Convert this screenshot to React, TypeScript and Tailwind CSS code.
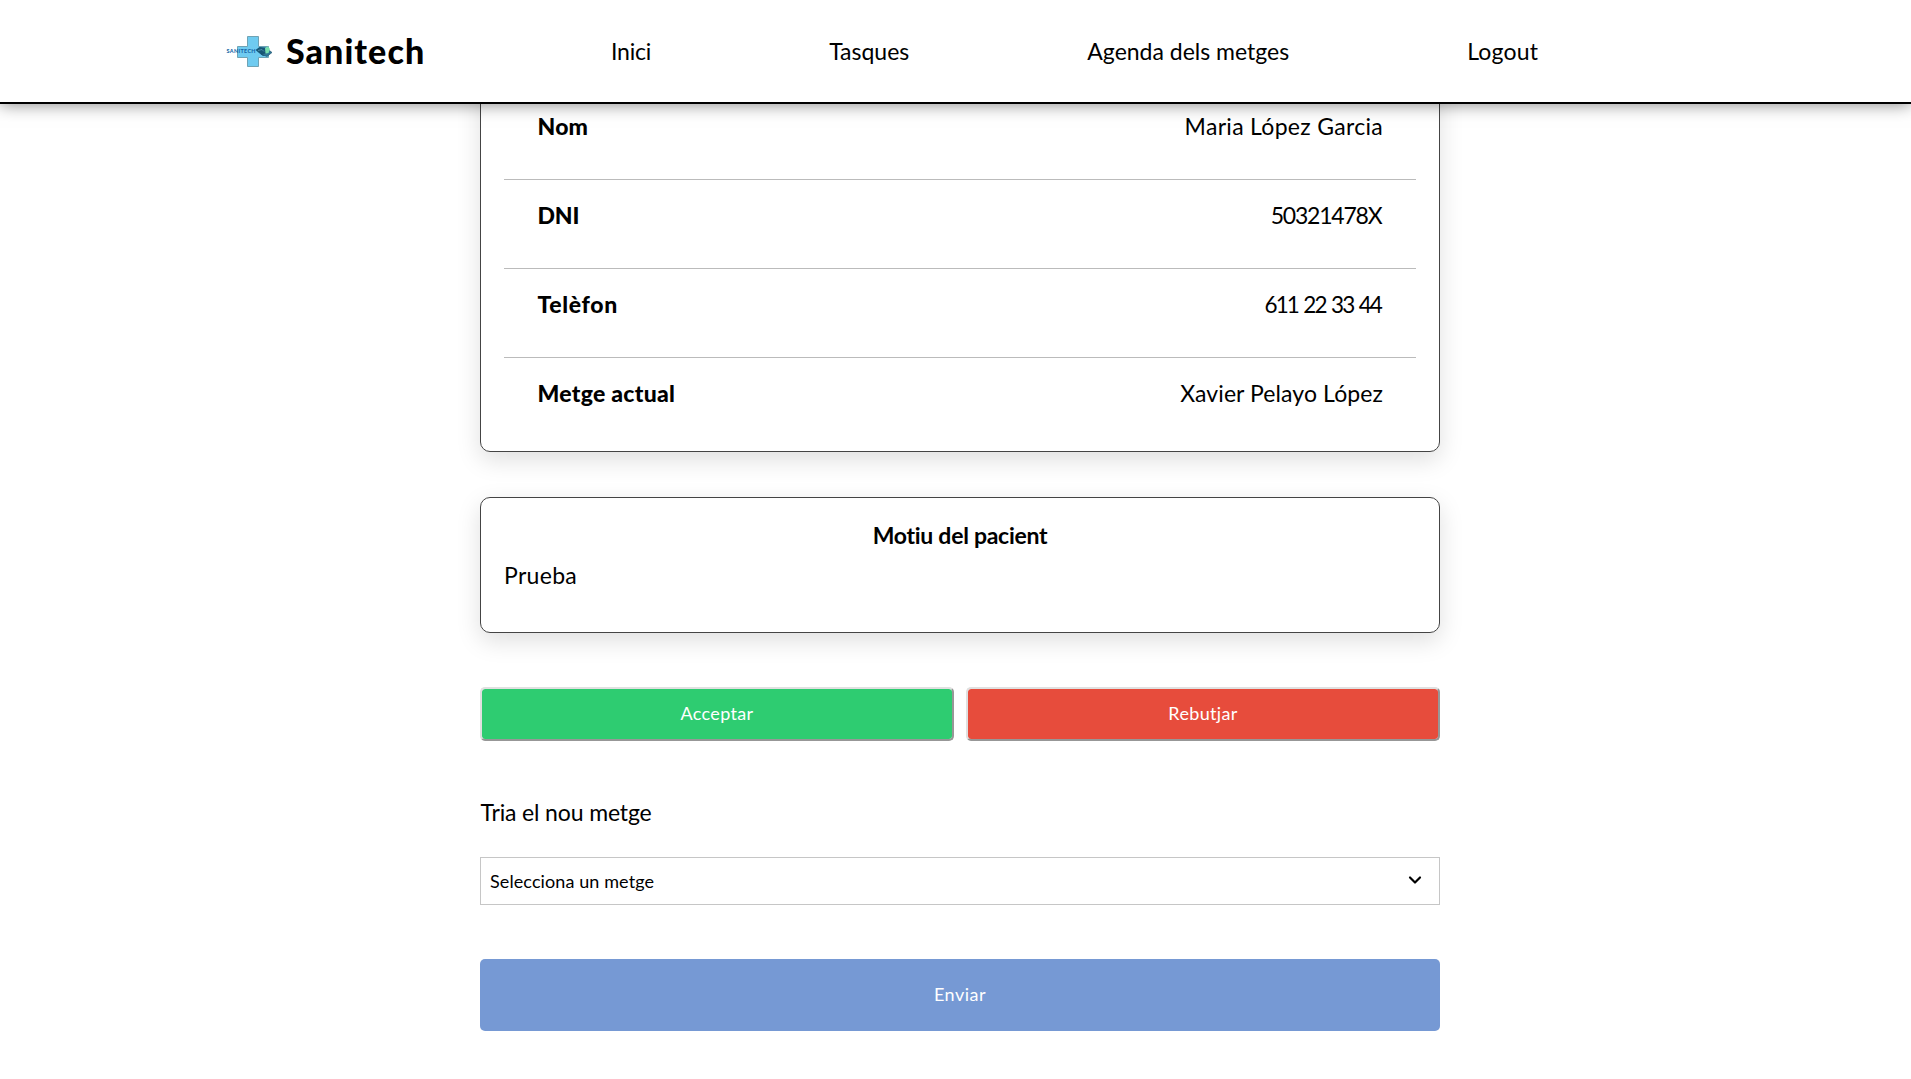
import { ChevronDown } from "lucide-react";

const links = [
  { label: "Inici", tracking: "pl-px tracking-[-0.2px]" },
  { label: "Tasques", tracking: "" },
  { label: "Agenda dels metges", tracking: "" },
  { label: "Logout", tracking: "tracking-[0.18px]" },
];

const patient = [
  { label: "Nom", labelTracking: "tracking-[0.2px]", value: "Maria López Garcia", valueTracking: "tracking-[0.3px]" },
  { label: "DNI", labelTracking: "tracking-[-0.2px]", value: "50321478X", valueTracking: "tracking-[-1.2px] mr-[1.5px]" },
  {
    label: "Telèfon",
    labelTracking: "tracking-[0.65px]",
    value: "611 22 33 44",
    valueTracking: "text-[22.5px] tracking-[-1.9px] [word-spacing:1.5px] mr-[2px]",
  },
  { label: "Metge actual", labelTracking: "tracking-[0.27px]", value: "Xavier Pelayo López", valueTracking: "tracking-[0.09px]" },
];

function Logo() {
  return (
    <svg width="48" height="34" viewBox="0 0 48 34" className="mt-[2px] shrink-0">
      <path
        d="M21.5 1.5h11v10h10v11h-10v9h-11v-9h-10v-11h10z"
        fill="#6fcbf0"
        stroke="#6fa3b4"
        strokeWidth="1"
      />
      <text x="0.5" y="18.2" fontSize="5.4" fontWeight="900" fill="#1766a8" textLength="29" fontFamily="Lato, sans-serif">
        SANITECH
      </text>
      <path d="M29.5 15l4-3 6.500.5 3 3.500-1 3-5 2-4-3z" fill="#175777" />
      <path d="M35 19l6 2.500 5-4-2.500-2-4 2.500z" fill="#2f7796" stroke="#174b68" strokeWidth="0.6" />
      <path d="M39 13l3-1.500 2 2.500-1.500 4-3 .5z" fill="#78dfae" />
      <path d="M32 15.500l4-1 2 2" stroke="#65a6bd" strokeWidth="0.7" fill="none" />
    </svg>
  );
}

export default function App() {
  return (
    <div className="h-[1079px] overflow-hidden bg-white font-['Lato',sans-serif] text-[23px] leading-[29px] text-black [font-variant-ligatures:none]">
      <header className="relative z-10 flex h-[104px] items-center border-b-2 border-black bg-white pl-[226px] shadow-[0_0_16px_rgba(0,0,0,0.5)]">
        <div className="flex w-[384px] items-center gap-3">
          <Logo />
          <span className="text-[34px] leading-[40px] font-black tracking-[1.08px]">Sanitech</span>
        </div>
        <nav className="flex gap-[178px] whitespace-nowrap">
          {links.map((l) => (
            <a key={l.label} className={l.tracking}>
              {l.label}
            </a>
          ))}
        </nav>
      </header>

      <main className="-mt-[37.2px] ml-[480px] w-[960px]">
        <section className="h-[385.2px] rounded-[10px] border border-[#444] p-[23px] shadow-[0_8px_24px_rgba(0,0,0,0.13)]">
          {patient.map((p) => (
            <div
              key={p.label}
              className="flex h-[89.2px] justify-between border-b border-[#bbb] pt-[21px] pr-[33px] pl-[33.5px] last:border-b-0"
            >
              <span className={`font-black ${p.labelTracking}`}>{p.label}</span>
              <span className={p.valueTracking}>{p.value}</span>
            </div>
          ))}
        </section>

        <section className="mt-[45px] h-[136px] rounded-[10px] border border-[#444] px-[22px] pt-[22.5px] shadow-[0_8px_24px_rgba(0,0,0,0.13)]">
          <h2 className="text-center font-bold tracking-[-0.27px]">Motiu del pacient</h2>
          <p className="mt-[11px] pl-px tracking-[0.3px]">Prueba</p>
        </section>

        <div className="mt-[54px] flex gap-3 text-lg tracking-[0.34px] text-white">
          <button className="h-[54px] flex-1 rounded-[5px] border-2 border-t-[#e0e0e0] border-r-[#979797] border-b-[#979797] border-l-[#e0e0e0] bg-[#2ecc71] bg-clip-padding pb-[2px]">
            Acceptar
          </button>
          <button className="h-[54px] flex-1 rounded-[5px] border-2 border-t-[#e0e0e0] border-r-[#979797] border-b-[#979797] border-l-[#e0e0e0] bg-[#e74c3c] bg-clip-padding pb-[2px]">
            Rebutjar
          </button>
        </div>

        <p className="mt-[56.5px] pl-[0.5px] tracking-[-0.14px]">Tria el nou metge</p>

        <div className="mt-[30.5px] flex h-12 items-center justify-between border border-[#c6c6c6] pr-[14px] pl-[9px] text-lg tracking-[0.1px]">
          <span>Selecciona un metge</span>
          <ChevronDown size={20} strokeWidth={2.6} className="mb-[2px]" />
        </div>

        <button className="mt-[54px] block h-[72px] w-full rounded-[5px] bg-[#7699d4] pb-[2px] text-lg tracking-[0.49px] text-white">
          Enviar
        </button>
      </main>
    </div>
  );
}
